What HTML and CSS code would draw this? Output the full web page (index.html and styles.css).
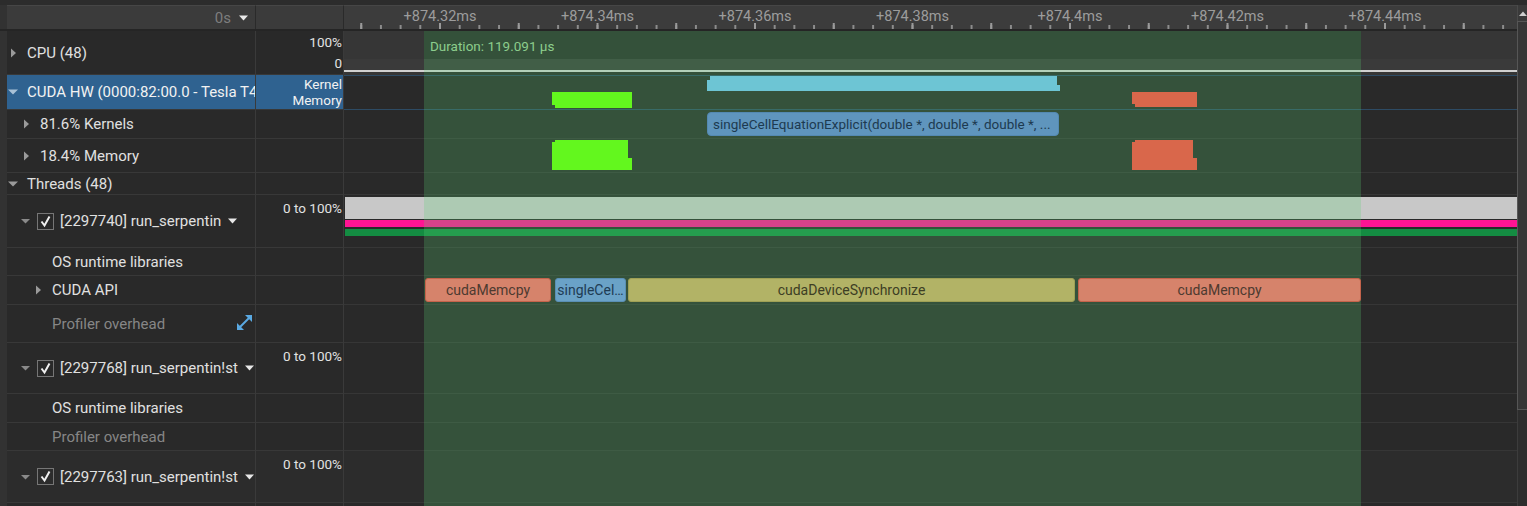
FILE: index.html
```html
<!DOCTYPE html>
<html>
<head>
<meta charset="utf-8">
<link rel="stylesheet" href="styles.css">
</head>
<body>
<div class="app">
  <div class="main">
    <div class="header">
      <div class="gut"></div>
      <div class="hcell h1"><span class="zero">0s</span><svg class="hcaret" width="9" height="6" viewBox="0 0 9 6"><path d="M0 0.5h9L4.5 5.5z" fill="#e8e8e8"/></svg></div>
      <div class="hcell h2"></div>
      <div class="ruler">
        <span class="rlabel" style="left:96px">+874.32ms</span>
        <span class="rlabel" style="left:253.5px">+874.34ms</span>
        <span class="rlabel" style="left:411px">+874.36ms</span>
        <span class="rlabel" style="left:568.5px">+874.38ms</span>
        <span class="rlabel" style="left:726px">+874.4ms</span>
        <span class="rlabel" style="left:883.5px">+874.42ms</span>
        <span class="rlabel" style="left:1041px">+874.44ms</span>
        <div class="ticks"></div>
      </div>
    </div>

    <div class="row r-cpu">
      <div class="gut"></div>
      <div class="c1 lv0"><span class="tw"><svg width="20" height="10" viewBox="0 0 20 10"><path d="M4 0.5L9 5L4 9.5z" fill="#9a9a9a"/></svg></span><span class="lbl">CPU (48)</span></div>
      <div class="c2 split"><span>100%</span><span>0</span></div>
      <div class="tl cpu-tl"><div class="cpu-band"></div><div class="cpu-line"></div></div>
    </div>

    <div class="row r-cuda">
      <div class="gut"></div>
      <div class="c1 lv0 sel"><span class="tw"><svg width="20" height="10" viewBox="0 0 20 10"><path d="M1 2.5h10L6 7.5z" fill="#a9c1d6"/></svg></span><span class="lbl">CUDA HW (0000:82:00.0 - Tesla T4</span></div>
      <div class="c2 sel two"><span>Kernel</span><span>Memory</span></div>
      <div class="tl cuda-tl">
        <div class="bar kern" style="left:363px;width:353px;top:0;height:15px"></div>
        <div class="bar mem-g notch-b" style="left:208px;width:80px;top:16px;height:16px"></div>
        <div class="bar mem-r notch-b" style="left:788px;width:65px;top:16px;height:15px"></div>
      </div>
    </div>

    <div class="row r-kern">
      <div class="gut"></div>
      <div class="c1 lv1"><span class="tw"><svg width="20" height="10" viewBox="0 0 20 10"><path d="M4 0.5L9 5L4 9.5z" fill="#9a9a9a"/></svg></span><span class="lbl">81.6% Kernels</span></div>
      <div class="c2"></div>
      <div class="tl">
        <div class="bar klabel" style="left:363px;width:352px;top:2px;height:24px">singleCellEquationExplicit(double *, double *, double *, ...</div>
      </div>
    </div>

    <div class="row r-mem">
      <div class="gut"></div>
      <div class="c1 lv1"><span class="tw"><svg width="20" height="10" viewBox="0 0 20 10"><path d="M4 0.5L9 5L4 9.5z" fill="#9a9a9a"/></svg></span><span class="lbl">18.4% Memory</span></div>
      <div class="c2"></div>
      <div class="tl">
        <div class="bar mem-g notch-t" style="left:208px;width:80px;top:1px;height:30px"></div>
        <div class="bar mem-r notch-t" style="left:788px;width:65px;top:1px;height:30px"></div>
      </div>
    </div>

    <div class="row r-threads">
      <div class="gut"></div>
      <div class="c1 lv0"><span class="tw"><svg width="20" height="10" viewBox="0 0 20 10"><path d="M1 2.5h10L6 7.5z" fill="#9a9a9a"/></svg></span><span class="lbl">Threads (48)</span></div>
      <div class="c2"></div>
      <div class="tl"></div>
    </div>

    <div class="row r-t1">
      <div class="gut"></div>
      <div class="c1 lv1"><span class="tw sm"><svg width="17" height="10" viewBox="0 0 17 10"><path d="M1 3h9L5.5 7.5z" fill="#8a8a8a"/></svg></span><span class="cb"><svg width="15" height="15" viewBox="0 0 15 15"><path d="M3.5 7.5L6.5 11.5L11.5 2.5" fill="none" stroke="#f0f0f0" stroke-width="2"/></svg></span><span class="lbl">[2297740] run_serpentin</span><svg class="dd" width="9" height="6" viewBox="0 0 9 6"><path d="M0 0.5h9L4.5 5.5z" fill="#e8e8e8"/></svg></div>
      <div class="c2 top"><span>0 to 100%</span></div>
      <div class="tl">
        <div class="util u-grey"></div>
        <div class="util u-pink"></div>
        <div class="util u-green"></div>
      </div>
    </div>

    <div class="row r-os">
      <div class="gut"></div>
      <div class="c1 lv2n"><span class="lbl">OS runtime libraries</span></div>
      <div class="c2"></div>
      <div class="tl"></div>
    </div>

    <div class="row r-api">
      <div class="gut"></div>
      <div class="c1 lv2"><span class="tw"><svg width="20" height="10" viewBox="0 0 20 10"><path d="M4 0.5L9 5L4 9.5z" fill="#9a9a9a"/></svg></span><span class="lbl">CUDA API</span></div>
      <div class="c2"></div>
      <div class="tl">
        <div class="bar ev ev-red" style="left:81px;width:126px">cudaMemcpy</div>
        <div class="bar ev ev-blue" style="left:211px;width:71px">singleCel…</div>
        <div class="bar ev ev-yel" style="left:284px;width:447px">cudaDeviceSynchronize</div>
        <div class="bar ev ev-red" style="left:734px;width:283px">cudaMemcpy</div>
      </div>
    </div>

    <div class="row r-prof">
      <div class="gut"></div>
      <div class="c1 lv2n"><span class="lbl dim">Profiler overhead</span><svg class="expand" width="17" height="17" viewBox="0 0 17 17"><path d="M4 13L13 4" stroke="#5aa9e2" stroke-width="2"/><path d="M9 1h7v7z" fill="#5aa9e2"/><path d="M1 9v7h7z" fill="#5aa9e2"/></svg></div>
      <div class="c2"></div>
      <div class="tl"></div>
    </div>

    <div class="row r-t2">
      <div class="gut"></div>
      <div class="c1 lv1"><span class="tw sm"><svg width="17" height="10" viewBox="0 0 17 10"><path d="M1 3h9L5.5 7.5z" fill="#8a8a8a"/></svg></span><span class="cb"><svg width="15" height="15" viewBox="0 0 15 15"><path d="M3.5 7.5L6.5 11.5L11.5 2.5" fill="none" stroke="#f0f0f0" stroke-width="2"/></svg></span><span class="lbl">[2297768] run_serpentin!st</span><svg class="dd" width="9" height="6" viewBox="0 0 9 6"><path d="M0 0.5h9L4.5 5.5z" fill="#e8e8e8"/></svg></div>
      <div class="c2 top"><span>0 to 100%</span></div>
      <div class="tl"></div>
    </div>

    <div class="row r-os2">
      <div class="gut"></div>
      <div class="c1 lv2n"><span class="lbl">OS runtime libraries</span></div>
      <div class="c2"></div>
      <div class="tl"></div>
    </div>

    <div class="row r-prof2">
      <div class="gut"></div>
      <div class="c1 lv2n"><span class="lbl dim">Profiler overhead</span></div>
      <div class="c2"></div>
      <div class="tl"></div>
    </div>

    <div class="row r-t3">
      <div class="gut"></div>
      <div class="c1 lv1"><span class="tw sm"><svg width="17" height="10" viewBox="0 0 17 10"><path d="M1 3h9L5.5 7.5z" fill="#8a8a8a"/></svg></span><span class="cb"><svg width="15" height="15" viewBox="0 0 15 15"><path d="M3.5 7.5L6.5 11.5L11.5 2.5" fill="none" stroke="#f0f0f0" stroke-width="2"/></svg></span><span class="lbl">[2297763] run_serpentin!st</span><svg class="dd" width="9" height="6" viewBox="0 0 9 6"><path d="M0 0.5h9L4.5 5.5z" fill="#e8e8e8"/></svg></div>
      <div class="c2 top"><span>0 to 100%</span></div>
      <div class="tl"></div>
    </div>

    <div class="row r-last">
      <div class="gut"></div>
      <div class="c1"></div>
      <div class="c2"></div>
      <div class="tl"></div>
    </div>

    <div class="selection"><span class="dur">Duration: 119.091 µs</span></div>
  </div>

  <div class="scroll">
    <div class="sb-btn"><svg width="8" height="5" viewBox="0 0 8 5"><path d="M0 5L4 0.5L8 5z" fill="#cfcfcf"/></svg></div>
    <div class="sb-thumb"></div>
    <div class="sb-track"></div>
  </div>
</div>
</body>
</html>
```

FILE: styles.css
```css
* { box-sizing: border-box; margin: 0; padding: 0; }

html, body {
  width: 1527px;
  height: 506px;
  overflow: hidden;
}

body {
  background: #2c2c2c;
  font-family: Roboto, "Liberation Sans", sans-serif;
  color: #dedede;
}

.app {
  display: flex;
  padding-top: 5px;
  height: 506px;
}

.main {
  position: relative;
  width: 1517px;
  display: flex;
  flex-direction: column;
  overflow: hidden;
}

/* ---------- header ---------- */
.header {
  display: grid;
  grid-template-columns: 7px 249px 88px 1173px;
  height: 26px;
  border-bottom: 2px solid #252525;
  flex: none;
}

.gut { background: #323232; }

.hcell {
  background: #3b3b3b;
  border-top: 1px solid #464646;
  border-right: 1px solid #2a2a2a;
}

.h1 {
  display: flex;
  align-items: center;
  justify-content: flex-end;
  padding-right: 7px;
  gap: 8px;
}

.zero {
  color: #7e7e7e;
  font-size: 15px;
}

.ruler {
  position: relative;
  background: #3c3c3c;
  border-top: 1px solid #464646;
}

.rlabel {
  position: absolute;
  top: 3px;
  transform: translateX(-50%);
  font-size: 14.5px;
  color: #9c9c9c;
  line-height: 16px;
  white-space: nowrap;
}

.ticks {
  position: absolute;
  left: 0;
  right: 0;
  bottom: 0;
  height: 6px;
  background:
    linear-gradient(to right, #9a9a9a 2px, transparent 2px) 16.25px 100% / 78.75px 6px repeat-x,
    linear-gradient(to right, #8c8c8c 2px, transparent 2px) 16.25px 100% / 19.6875px 4px repeat-x;
}

/* ---------- rows ---------- */
.row {
  display: grid;
  grid-template-columns: 7px 249px 88px 1173px;
  flex: none;
}

.c1 {
  display: flex;
  align-items: center;
  background: #292929;
  border-right: 1px solid #3a3a3a;
  border-bottom: 1px solid #383838;
  overflow: hidden;
  white-space: nowrap;
  font-size: 15px;
  color: #e0e0e0;
}

.c2 {
  background: #292929;
  border-right: 1px solid #3a3a3a;
  border-bottom: 1px solid #383838;
  font-size: 13.5px;
  color: #e2e2e2;
  text-align: right;
  padding-right: 1px;
  display: flex;
  flex-direction: column;
  line-height: 16px;
}

.c2.split { justify-content: space-between; padding-top: 3px; padding-bottom: 3px; }
.c2.two { justify-content: center; }
.c2.top { padding-top: 5px; }

.sel { background: #2f6290; color: #f2f2f2; }

.lv0 { padding-left: 0; }
.lv1 { padding-left: 13px; }
.lv2 { padding-left: 25px; }
.lv2n { padding-left: 45px; }

.tw {
  display: flex;
  align-items: center;
  width: 20px;
  flex: none;
}
.tw.sm { width: 17px; }

.cb {
  width: 17px;
  height: 17px;
  flex: none;
  border: 1px solid #767676;
  display: flex;
  align-items: center;
  justify-content: center;
  margin-right: 6px;
}

.dd { margin-left: 7px; flex: none; }

.dim { color: #868686; }

.expand { margin-left: auto; margin-right: 2px; margin-top: -2px; }

/* row heights */
.r-cpu { height: 44px; }
.r-cuda { height: 35px; }
.r-kern { height: 29px; }
.r-mem { height: 34px; }
.r-threads { height: 22px; }
.r-t1 { height: 53px; }
.r-os { height: 28px; }
.r-api { height: 29px; }
.r-prof { height: 38px; }
.r-t2 { height: 51px; }
.r-os2 { height: 29px; }
.r-prof2 { height: 28px; }
.r-t3 { height: 52px; }
.r-last { height: 20px; }

.r-t3 .c1, .r-t3 .c2, .r-t3 .tl { background: #2c2c2c; }

/* ---------- timeline ---------- */
.tl {
  position: relative;
  background: #292929;
  border-bottom: 1px solid #363636;
}

.cpu-tl {
  border-bottom: none;
  background: linear-gradient(to right, #363636 80px, #282828 80px, #282828 1017px, #363636 1017px);
}

.cpu-band {
  position: absolute;
  left: 0; right: 0;
  top: 28px;
  height: 11px;
  background: #3a3a3a;
}

.cpu-line {
  position: absolute;
  left: 0; right: 0;
  top: 39px;
  height: 2px;
  background: #d0d0d0;
}

.cuda-tl {
  border-top: 1px solid #2d4b64;
  border-bottom: 1px solid #2d4b64;
}

.bar {
  position: absolute;
  z-index: 2;
}

.kern {
  background: #6dc5d4;
  clip-path: polygon(0 4px, 3px 4px, 3px 0, calc(100% - 3px) 0, calc(100% - 3px) 9px, 100% 9px, 100% 100%, 0 100%);
}
.mem-g { background: #63f71e; }
.mem-r { background: #d9674b; }

.notch-b {
  clip-path: polygon(0 0, 100% 0, 100% 100%, calc(100% - 4px) 100%, calc(100% - 4px) 7px, calc(100% - 4px) 100%, 3px 100%, 3px calc(100% - 3px), 0 calc(100% - 3px));
}
.notch-t {
  clip-path: polygon(0 2px, 3px 2px, 3px 0, calc(100% - 4px) 0, calc(100% - 4px) 18px, 100% 18px, 100% 100%, 0 100%);
}

.klabel {
  background: #5f95bd;
  border: 1px solid #5489b1;
  border-radius: 4px;
  color: #1d3a50;
  font-size: 13.5px;
  line-height: 22px;
  padding-left: 5px;
  white-space: nowrap;
  overflow: hidden;
}

.util {
  position: absolute;
  left: 1px;
  right: 0;
}
.u-grey { top: 2px; height: 22px; background: #c8c8c8; }
.u-pink { top: 25px; height: 7px; background: #ff1493; }
.u-green { top: 34px; height: 7px; background: #148c42; }

.ev {
  top: 2px;
  height: 24px;
  border-radius: 3px;
  font-size: 14px;
  line-height: 22px;
  text-align: center;
  white-space: nowrap;
  overflow: hidden;
}
.ev-red { background: #d6836b; border: 1px solid #c4634b; color: #4d3a30; }
.ev-blue { background: #6aa2c7; border: 1px solid #5a8fb4; color: #1e3c54; }
.ev-yel { background: #b2b366; border: 1px solid #9fa055; color: #3d3e24; }

/* selection overlay */
.selection {
  position: absolute;
  left: 424px;
  top: 26px;
  width: 937px;
  bottom: 0;
  background: rgba(90, 208, 114, 0.245);
  z-index: 1;
  padding: 5px 0 0 6px;
}

.dur {
  font-size: 13.5px;
  color: #8ccd8c;
}

/* ---------- scrollbar ---------- */
.scroll {
  width: 10px;
  display: flex;
  flex-direction: column;
  background: #2e2e2e;
}

.sb-btn {
  height: 16px;
  background: #3a3a3a;
  border-left: 1px solid #4a4a4a;
  display: flex;
  align-items: center;
  justify-content: flex-end;
}

.sb-thumb {
  height: 389px;
  background: #363636;
  border: 1px solid #565656;
  border-right: none;
}

.sb-track {
  flex: 1;
  background: #2d2d2d;
  border-left: 1px solid #3c3c3c;
}
```
